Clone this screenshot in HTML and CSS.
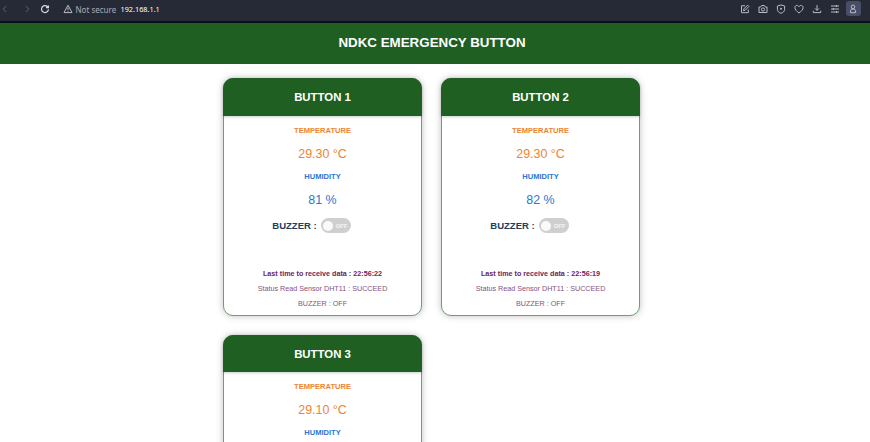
FILE: index.html
```html
<!DOCTYPE html>
<html lang="en">
<head>
<meta charset="utf-8">
<title>NDKC Emergency Button</title>
<link rel="stylesheet" href="styles.css">
</head>
<body>
<div class="browser">
  <svg class="ico nav back" viewBox="0 0 10 10"><path d="M6.2 2 3.2 5l3 3"/></svg>
  <svg class="ico nav forward" viewBox="0 0 10 10"><path d="m3.8 2 3 3-3 3"/></svg>
  <svg class="ico reload" viewBox="0 0 10 10"><path d="M8 3.2A3.5 3.5 0 1 0 8.5 5.4M8.4 1.4v2.3H6"/></svg>
  <svg class="ico warn" viewBox="0 0 10 10"><path d="M5 1.2 9 8.6H1zM5 3.7v2.4M5 6.9v.8"/></svg>
  <span class="secure">Not secure</span>
  <span class="url">192.168.1.1</span>
  <div class="tools">
    <svg class="ico" viewBox="0 0 10 10"><path d="M5 1.8H1.5v6.9h6.8V5.6M3.5 6.7l.4-1.8 3.7-3.7 1.3 1.3-3.7 3.7z"/></svg>
    <svg class="ico" viewBox="0 0 10 10"><path d="M1 3h1.7l1-1.5h2.6l1 1.5H9v5.5H1z"/><circle cx="5" cy="5.5" r="1.6"/></svg>
    <svg class="ico" viewBox="0 0 10 10"><path d="M5 .9 8.6 2v3.3C8.6 7.4 7 8.6 5 9.3 3 8.6 1.4 7.4 1.4 5.3V2z"/><circle class="dot" cx="5" cy="4.8" r="1"/></svg>
    <svg class="ico" viewBox="0 0 10 10"><path d="M5 9C2.6 7.2.9 5.6.9 3.6.9 1.2 3.8.6 5 2.6 6.2.6 9.1 1.2 9.1 3.6 9.1 5.6 7.4 7.2 5 9z"/></svg>
    <svg class="ico" viewBox="0 0 10 10"><path d="M5 1v5.3M3 4.400l2 2 2-2M1.300 6.700v1.900h7.400V6.700"/></svg>
    <svg class="ico" viewBox="0 0 10 10"><path d="M1 2h8M1 5h8M1 8h8M6.500 1v2M3.300 4v2M6.500 7v2"/></svg>
    <span class="profile"><svg class="ico" viewBox="0 0 10 10"><circle cx="5" cy="2.900" r="1.800"/><path d="M3.700 5h2.600l1.300 1.800v1.900H2.400V6.800z"/></svg></span>
  </div>
</div>
<header class="topbar"><h1>NDKC EMERGENCY BUTTON</h1></header>
<main class="cards">
  <section class="card">
    <h2>BUTTON 1</h2>
    <div class="body">
      <h4 class="temp">TEMPERATURE</h4>
      <p class="reading temp">29.30 °C</p>
      <h4 class="hum">HUMIDITY</h4>
      <p class="reading hum">81 %</p>
      <div class="buzzer"><span>BUZZER :</span><span class="switch"><i></i>OFF</span></div>
      <p class="status time">Last time to receive data : 22:56:22</p>
      <p class="status">Status Read Sensor DHT11 : SUCCEED</p>
      <p class="status">BUZZER : OFF</p>
    </div>
  </section>
  <section class="card">
    <h2>BUTTON 2</h2>
    <div class="body">
      <h4 class="temp">TEMPERATURE</h4>
      <p class="reading temp">29.30 °C</p>
      <h4 class="hum">HUMIDITY</h4>
      <p class="reading hum">82 %</p>
      <div class="buzzer"><span>BUZZER :</span><span class="switch"><i></i>OFF</span></div>
      <p class="status time">Last time to receive data : 22:56:19</p>
      <p class="status">Status Read Sensor DHT11 : SUCCEED</p>
      <p class="status">BUZZER : OFF</p>
    </div>
  </section>
  <section class="card">
    <h2>BUTTON 3</h2>
    <div class="body">
      <h4 class="temp">TEMPERATURE</h4>
      <p class="reading temp">29.10 °C</p>
      <h4 class="hum">HUMIDITY</h4>
    </div>
  </section>
</main>
</body>
</html>
```
FILE: styles.css
```css
* { box-sizing: border-box; }
html, body { height: 442px; overflow: hidden; }
body { display: flex; flex-direction: column; margin: 0; background: #fff; font-family: "Liberation Sans", Arial, sans-serif; }
h1, h2, h4, p { margin: 0; }

.browser {
  display: flex;
  flex: none;
  align-items: center;
  height: 23px;
  padding: 0 9.5px 4px 0;
  background: #262936;
  border-bottom: 2px solid #0b0d1a;
  font-family: "Noto Sans", sans-serif;
}
.ico { display: block; flex: none; width: 10px; height: 10px; fill: none; stroke: #b9bbc4; stroke-width: 1; }
.nav { stroke: #5d606d; }
.forward { margin-left: 12px; }
.reload { margin-left: 8px; stroke: #d8d9df; stroke-width: 1.2; }
.warn { margin-left: 13px; }
.secure { margin: 2px 0 0 2.5px; width: 39px; font-size: 8px; line-height: 12px; color: #a9abb5; white-space: nowrap; }
.url { margin-left: 6px; font-size: 7.3px; line-height: 12px; color: #fff; }
.tools { display: flex; align-items: center; gap: 8px; margin-left: auto; }
.dot { fill: #b9bbc4; stroke: none; }
.profile { display: flex; align-items: center; justify-content: center; width: 15px; height: 15px; margin-left: -2px; border-radius: 3px; background: #4a4d68; }

.topbar { flex: none; height: 41px; padding-right: 6px; background: #1f6022; text-align: center; }
.topbar h1 { font-size: 13.35px; line-height: 40px; color: #fff; }

.cards {
  display: grid;
  flex: 1;
  min-height: 0;
  overflow: hidden;
  grid-template-columns: 199px 199px;
  grid-auto-rows: 238px;
  gap: 18.5px 19px;
  padding: 14px 0 0 223px;
}
.card {
  border: 1px solid #749a76;
  border-radius: 10px;
  background: #fff;
  text-align: center;
  box-shadow: 0 0 7px rgba(0, 0, 0, .25);
}
.card h2 {
  height: 37.5px;
  margin: -1px -1px 0;
  border-radius: 10px 10px 0 0;
  background: #1f6022;
  color: #fff;
  font-size: 11.4px;
  line-height: 38px;
  box-shadow: 0 1px 3px rgba(0, 0, 0, .2);
}
.body { padding-top: 8px; }
.body h4 { font-size: 7.55px; line-height: 14px; }
.reading { font-size: 12.45px; line-height: 32px; }
.temp { color: #ec8432; }
.hum { color: #2b76d2; }
.buzzer { display: flex; align-items: center; justify-content: center; gap: 4px; height: 20px; padding-right: 22px; font-size: 9.5px; font-weight: bold; color: #223c5c; }
.switch { display: flex; align-items: center; gap: 3px; width: 30px; height: 15px; padding-left: 2px; border-radius: 8px; background: #cfcfcf; color: #f5f5f5; font-size: 5.8px; }
.switch i { width: 10px; height: 10px; border-radius: 50%; background: #fafafa; }
.status { font-size: 7.2px; line-height: 15.2px; color: #85527f; }
.time { margin-top: 30px; font-weight: bold; color: #6a2562; }
```
